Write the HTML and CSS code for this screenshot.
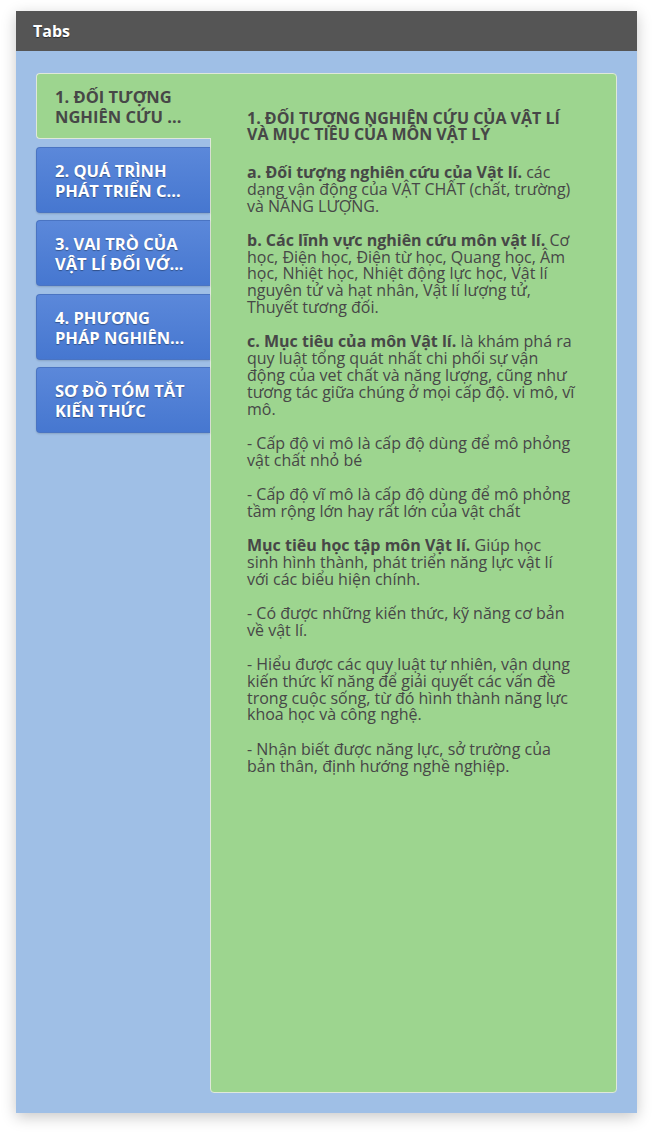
FILE: index.html
```html
<!DOCTYPE html>
<html lang="vi">
<head>
<meta charset="utf-8">
<title>Tabs</title>
<link rel="stylesheet" href="styles.css">
</head>
<body>
<div class="widget">
  <div class="widget-header">Tabs</div>
  <div class="widget-body">
    <div class="tabs">
      <div class="tab active">1. ĐỐI TƯỢNG NGHIÊN CỨU ...</div>
      <div class="tab">2. QUÁ TRÌNH PHÁT TRIỂN C...</div>
      <div class="tab">3. VAI TRÒ CỦA VẬT LÍ ĐỐI VỚ...</div>
      <div class="tab">4. PHƯƠNG PHÁP NGHIÊN...</div>
      <div class="tab">SƠ ĐỒ TÓM TẮT KIẾN THỨC</div>
    </div>
    <div class="panel">
      <h2 class="panel-title">1. ĐỐI TƯỢNG NGHIÊN CỨU CỦA VẬT LÍ VÀ MỤC TIÊU CỦA MÔN VẬT LÝ</h2>
      <p><b>a. Đối tượng nghiên cứu của Vật lí.</b> các dạng vận động của VẬT CHẤT (chất, trường) và NĂNG LƯỢNG.</p>
      <p><b>b. Các lĩnh vực nghiên cứu môn vật lí.</b> Cơ học, Điện học, Điện từ học, Quang học, Âm học, Nhiệt học, Nhiệt động lực học, Vật lí nguyên tử và hạt nhân, Vật lí lượng tử, Thuyết tương đối.</p>
      <p><b>c. Mục tiêu của môn Vật lí.</b> là khám phá ra quy luật tổng quát nhất chi phối sự vận động của vet chất và năng lượng, cũng như tương tác giữa chúng ở mọi cấp độ. vi mô, vĩ mô.</p>
      <p>- Cấp độ vi mô là cấp độ dùng để mô phỏng vật chất nhỏ bé</p>
      <p>- Cấp độ vĩ mô là cấp độ dùng để mô phỏng tầm rộng lớn hay rất lớn của vật chất</p>
      <p><b>Mục tiêu học tập môn Vật lí.</b> Giúp học<br>sinh hình thành, phát triển năng lực vật lí với các biểu hiện chính.</p>
      <p>- Có được những kiến thức, kỹ năng cơ bản về vật lí.</p>
      <p>- Hiểu được các quy luật tự nhiên, vận dụng kiến thức kĩ năng để giải quyết các vấn đề trong cuộc sống, từ đó hình thành năng lực khoa học và công nghệ.</p>
      <p>- Nhận biết được năng lực, sở trường của bản thân, định hướng nghề nghiệp.</p>
    </div>
  </div>
</div>
</body>
</html>
```

FILE: styles.css
```css
html, body {
  margin: 0;
  padding: 0;
  background: #ffffff;
}

body {
  font-family: "Open Sans", "Noto Sans", sans-serif;
  padding: 11px 16px 22px;
}

.widget {
  width: 621px;
  box-shadow: 0 4px 14px rgba(0, 0, 0, 0.22);
}

.widget-header {
  height: 40px;
  box-sizing: border-box;
  background: #555555;
  color: #ffffff;
  font-weight: 700;
  font-size: 16px;
  line-height: 40px;
  padding-left: 17px;
  text-shadow: 0 1px 1px rgba(0, 0, 0, 0.5);
}

.widget-body {
  background: #9fbfe6;
  padding: 22px 20px 20px 20px;
  display: flex;
  align-items: flex-start;
}

.tabs {
  width: 174px;
  flex: none;
  display: flex;
  flex-direction: column;
  gap: 7.5px;
  position: relative;
  z-index: 2;
}

.tab {
  height: 66px;
  box-sizing: border-box;
  padding: 13px 19px 0 18px;
  font-size: 16.5px;
  line-height: 20px;
  font-weight: 700;
  color: #ffffff;
  background: linear-gradient(#5b88da, #4677d0);
  border: 1px solid #4a74c2;
  border-right: none;
  border-radius: 4px 0 0 4px;
  text-shadow: 0 1px 1px rgba(0, 0, 0, 0.35);
  box-shadow: 0 1px 2px rgba(0, 0, 0, 0.15);
}

.tab.active {
  background: #9dd58f;
  color: #474747;
  border: 1px solid #dfe8da;
  border-right: none;
  width: 175px;
  text-shadow: none;
  box-shadow: none;
}

.panel {
  flex: 1;
  height: 1020px;
  box-sizing: border-box;
  background: #9dd58f;
  border: 1px solid #dfe8da;
  border-radius: 0 4px 4px 4px;
  padding: 36px 38px 20px 36px;
  color: #474747;
  font-size: 16px;
  line-height: 16.8px;
}

.panel-title {
  margin: 0 0 22px 0;
  font-size: 16px;
  line-height: 16px;
  font-weight: 700;
}

.panel p {
  margin: 0 0 17.5px 0;
}

.panel b {
  font-weight: 700;
}
```
